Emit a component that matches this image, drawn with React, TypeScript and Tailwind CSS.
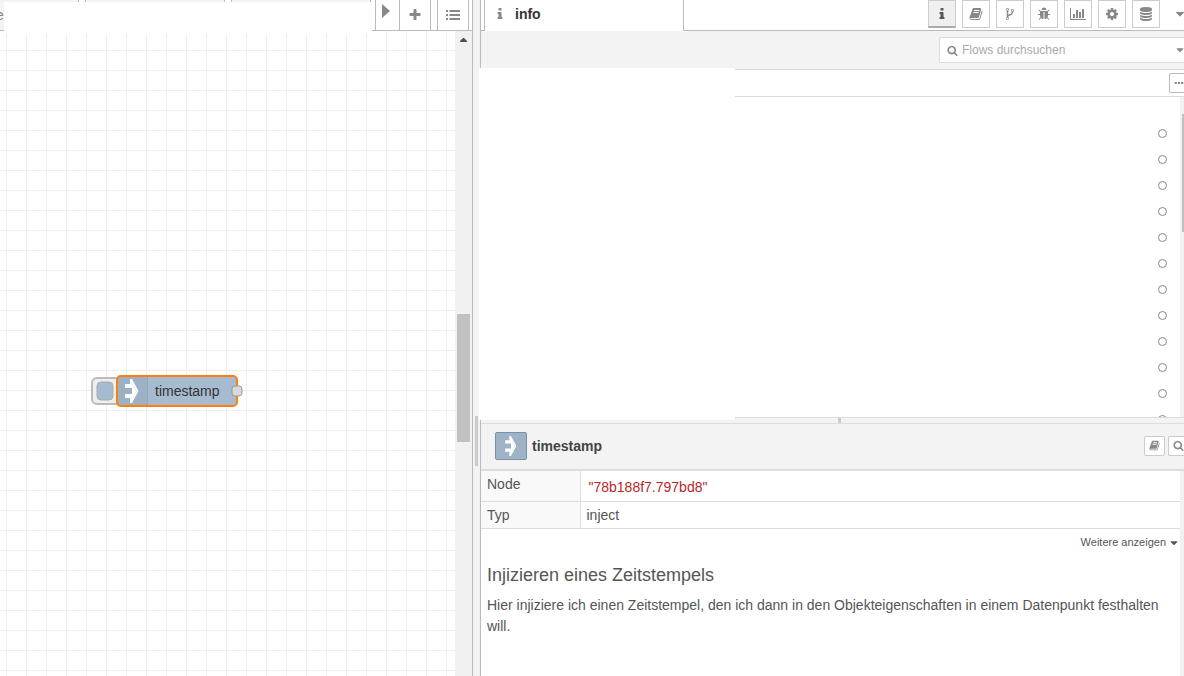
import type { ReactNode } from "react";

const ICONS = {
  info: "M1216 1344v128q0 26-19 45t-45 19h-512q-26 0-45-19t-19-45v-128q0-26 19-45t45-19h64v-384h-64q-26 0-45-19t-19-45v-128q0-26 19-45t45-19h384q26 0 45 19t19 45v576h64q26 0 45 19t19 45zm-128-1152v192q0 26-19 45t-45 19h-256q-26 0-45-19t-19-45v-192q0-26 19-45t45-19h256q26 0 45 19t19 45z",
  book: "M1703 478q40 57 18 129l-275 906q-19 64-76.5 107.5t-122.500 43.500h-923q-77 0-148.500-53.500t-99.500-131.500q-24-67-2-127 0-4 3-27t4-37q1-8-3-21.500t-3-19.500q2-11 8-21t16.500-23.500 16.500-23.500q23-38 45-91.500t30-91.500q3-10 .5-30t-.5-28q3-11 17-28t17-23q21-36 42-92t25-90q1-9-2.500-32t.5-28q4-13 22-30.500t22-22.500q19-26 42.500-84.500t27.500-96.500q1-8-3-25.500t-2-26.500q2-8 9-18t18-23 17-21q8-12 16.500-30.500t15-35 16-36 19.500-32 26.500-23.500 36-11.500 47.500 5.500l-1 3q38-9 51-9h761q74 0 114 56t18 130l-274 906q-36 119-71.500 153.500t-128.500 34.500h-869q-27 0-38 15-11 16-1 43 24 70 144 70h923q29 0 56-15.500t35-41.500l300-987q7-22 5-57 38 15 59 43zm-1064 2q-4 13 2 22.500t20 9.500h608q13 0 25.500-9.500t16.500-22.500l21-64q4-13-2-22.500t-20-9.500h-608q-13 0-25.500 9.500t-16.500 22.500zm-83 256q-4 13 2 22.500t20 9.500h608q13 0 25.500-9.500t16.500-22.500l21-64q4-13-2-22.500t-20-9.500h-608q-13 0-25.500 9.500t-16.500 22.500z",
  fork: "M672 1472q0-40-28-68t-68-28-68 28-28 68 28 68 68 28 68-28 28-68zm0-1152q0-40-28-68t-68-28-68 28-28 68 28 68 68 28 68-28 28-68zm640 128q0-40-28-68t-68-28-68 28-28 68 28 68 68 28 68-28 28-68zm96 0q0 52-26 96.500t-70 69.500q-2 287-226 414-67 38-203 81-128 40-169.500 71t-41.500 100v26q44 25 70 69.500t26 96.500q0 80-56 136t-136 56-136-56-56-136q0-52 26-96.500t70-69.500v-820q-44-25-70-69.500t-26-96.500q0-80 56-136t136-56 136 56 56 136q0 52-26 96.500t-70 69.500v497q54-26 154-57 55-17 87.500-29.500t70.500-31 59-39.500 40.500-51 28-69.500 8.500-91.500q-44-25-70-69.500t-26-96.500q0-80 56-136t136-56 136 56 56 136z",
  bug: "M1696 960q0 26-19 45t-45 19h-224q0 171-67 290l208 209q19 19 19 45t-19 45q-18 19-45 19t-45-19l-198-197q-5 5-15 13t-42 28.500-65 36.500-82 29-97 13v-896h-128v896q-51 0-101.500-13.500t-87-33-66-39-43.500-32.500l-15-14-183 207q-20 21-48 21-24 0-43-16-19-18-20.500-44.500t15.500-46.500l202-227q-58-114-58-274h-224q-26 0-45-19t-19-45 19-45 45-19h224v-294l-173-173q-19-19-19-45t19-45 45-19 45 19l173 173h844l173-173q19-19 45-19t45 19 19 45-19 45l-173 173v294h224q26 0 45 19t19 45zm-480-576h-640q0-133 93.500-226.500t226.500-93.500 226.500 93.500 93.500 226.500z",
  chart: "M640 896v512h-256v-512h256zm384-512v1024h-256v-1024h256zm1024 1152v128h-2048v-1536h128v1408h1920zm-640-896v768h-256v-768h256zm384-384v1152h-256v-1152h256z",
  cog: "M1152 896q0-106-75-181t-181-75-181 75-75 181 75 181 181 75 181-75 75-181zm512-109v222q0 12-8 23t-20 13l-185 28q-19 54-39 91 35 50 107 138 10 12 10 25t-9 23q-27 37-99 108t-94 71q-12 0-26-9l-138-108q-44 23-91 38-16 136-29 186-7 28-36 28h-222q-14 0-24.500-8.500t-11.500-21.500l-28-184q-49-16-90-37l-141 107q-10 9-25 9-14 0-25-11-126-114-165-168-7-10-7-23 0-12 8-23 15-21 51-66.500t54-70.500q-27-50-41-99l-183-27q-13-2-21-12.500t-8-23.500v-222q0-12 8-23t19-13l186-28q14-46 39-92-40-57-107-138-10-12-10-24 0-10 9-23 26-36 98.500-107.500t94.500-71.500q13 0 26 10l138 107q44-23 91-38 16-136 29-186 7-28 36-28h222q14 0 24.500 8.500t11.500 21.500l28 184q49 16 90 37l142-107q9-9 24-9 13 0 25 10 129 119 165 170 7 8 7 22 0 12-8 23-15 21-51 66.500t-54 70.500q26 50 41 98l183 28q13 2 21 12.500t8 23.500z",
  database: "M896 768q237 0 443-43t325-127v170q0 69-103 128t-280 93.500-385 34.500-385-34.500-280-93.500-103-128v-170q119 84 325 127t443 43zm0 768q237 0 443-43t325-127v170q0 69-103 128t-280 93.500-385 34.500-385-34.500-280-93.500-103-128v-170q119 84 325 127t443 43zm0-384q237 0 443-43t325-127v170q0 69-103 128t-280 93.500-385 34.500-385-34.500-280-93.500-103-128v-170q119 84 325 127t443 43zm0-1152q208 0 385 34.500t280 93.500 103 128v128q0 69-103 128t-280 93.500-385 34.500-385-34.500-280-93.500-103-128v-128q0-69 103-128t280-93.500 385-34.500z",
  search: "M1216 832q0-185-131.500-316.500t-316.500-131.500-316.500 131.500-131.500 316.500 131.500 316.500 316.500 131.500 316.500-131.500 131.500-316.500zm512 832q0 52-38 90t-90 38q-54 0-90-38l-343-342q-179 124-399 124-143 0-273.500-55.500t-225-150-150-225-55.500-273.500 55.500-273.500 150-225 225-150 273.500-55.500 273.500 55.500 225 150 150 225 55.500 273.500q0 220-124 399l343 343q37 37 37 90z",
  plus: "M1600 736v192q0 40-28 68t-68 28h-416v416q0 40-28 68t-68 28h-192q-40 0-68-28t-28-68v-416h-416q-40 0-68-28t-28-68v-192q0-40 28-68t68-28h416v-416q0-40 28-68t68-28h192q40 0 68 28t28 68v416h416q40 0 68 28t28 68z",
  list: "M0 256h256v256H0zM0 768h256v256H0zM0 1280h256v256H0zM448 256h1344v256H448zM448 768h1344v256H448zM448 1280h1344v256H448z",
  caret: "M1408 704q0 26-19 45l-448 448q-19 19-45 19t-45-19l-448-448q-19-19-19-45t19-45 45-19h896q26 0 45 19t19 45z",
  ellipsis: "M128 704h384v384H128zM704 704h384v384H704zM1280 704h384v384h-384z",
};

type IconName = keyof typeof ICONS;

function Icon({ name, className = "size-3.5" }: { name: IconName; className?: string }) {
  return (
    <svg
      aria-hidden="true"
      viewBox={name === "chart" ? "0 0 2048 1792" : "0 0 1792 1792"}
      className={`shrink-0 fill-current ${className}`}
    >
      <path d={ICONS[name]} />
    </svg>
  );
}

// 14 x 24 box
function InjectArrow() {
  return (
    <>
      <path d="M0 5h5V0h2l6.500 12L7 24H5v-5H0v-4h7V9H0z" fill="#fff" />
      <path d="M8 5l3.500 7L8 19" fill="none" stroke="#9fb3c7" strokeOpacity="0.300" strokeWidth="0.800" />
    </>
  );
}

const sidebarTabs: { icon: IconName; label: string }[] = [
  { icon: "info", label: "Info" },
  { icon: "book", label: "Hilfe" },
  { icon: "fork", label: "Verlauf" },
  { icon: "bug", label: "Debug" },
  { icon: "chart", label: "Dashboard" },
  { icon: "cog", label: "Konfiguration" },
  { icon: "database", label: "Kontext" },
];

function BarButton({ label, className, children }: { label: string; className: string; children: ReactNode }) {
  return (
    <button type="button" aria-label={label} className={`flex items-center justify-center border-[#bbb] bg-white ${className}`}>
      {children}
    </button>
  );
}

function FlowCanvas() {
  return (
    <svg className="h-full min-w-0 flex-1">
      <defs>
        <pattern id="grid" width="20" height="20" patternUnits="userSpaceOnUse">
          <path d="M6.500 0v20M0 19.500h20" stroke="#eee" fill="none" />
        </pattern>
      </defs>
      <rect width="100%" height="100%" fill="url(#grid)" />
      <g transform="translate(92 345)">
        <rect x="0" y="2" width="32" height="26" rx="5" fill="#eee" stroke="#bbb" strokeWidth="2" />
        <rect x="5" y="6" width="16" height="18" rx="4" fill="#a6bbcf" stroke="#aaa" />
        <rect x="25" y="0" width="120" height="30" rx="4" fill="#a6bbcf" />
        <path d="M55 0v30H29a4 4 0 0 1-4-4V4a4 4 0 0 1 4-4z" fill="#000" fillOpacity="0.050" />
        <path d="M55.500 1v28" stroke="#000" strokeOpacity="0.100" />
        <g transform="translate(33 3)">
          <InjectArrow />
        </g>
        <rect x="25" y="0" width="120" height="30" rx="4" fill="none" stroke="#ff7f0e" strokeWidth="2" />
        <rect x="140" y="10" width="10" height="10" rx="3" fill="#d9d9d9" stroke="#999" />
        <text x="63" y="20" fontSize="14" fill="#333">
          timestamp
        </text>
      </g>
    </svg>
  );
}

function Workspace() {
  return (
    <section className="relative flex w-[473px] shrink-0 flex-col border-r border-[#bbb]">
      <div className="flex h-[31px] border-b border-[#bbb]">
        <div className="flex min-w-0 flex-1 gap-1.5 overflow-hidden pr-1">
          <div className="flex w-[79px] items-center border-r border-[#bbb] bg-[#f3f3f3]">
            <span className="-ml-1 text-sm text-[#888]">e</span>
          </div>
          <div className="w-[140px] border-x border-[#bbb] bg-[#f3f3f3]" />
          <div className="flex-1 border-x border-[#bbb] bg-[#f3f3f3]" />
        </div>
        <BarButton label="Weiter" className="w-6 border-l pr-1 pb-2 text-[#888]">
          <svg aria-hidden="true" viewBox="0 0 8 14" className="h-3.5 w-2 fill-current">
            <path d="M0 0l8 7-8 7z" />
          </svg>
        </BarButton>
        <BarButton label="Flow hinzufügen" className="w-8 border-x text-[#888]">
          <Icon name="plus" />
        </BarButton>
        <BarButton label="Flows auflisten" className="mr-[3px] ml-1.5 w-8 border-x text-[#888]">
          <Icon name="list" />
        </BarButton>
      </div>
      <div className="flex min-h-0 flex-1">
        <FlowCanvas />
        <div className="flex w-[17px] flex-col bg-[#f1f1f1] px-0.5">
          <svg aria-hidden="true" viewBox="0 0 13 17" className="h-[17px] fill-[#505050]">
            <path d="M6 7h1l3 3v1H3v-1z" />
          </svg>
          <div className="mt-[266px] h-32 bg-[#c1c1c1]" />
        </div>
      </div>
      {/* blanked-out flow names */}
      <div className="absolute top-0.5 left-1 h-8 w-[368px] bg-white" />
    </section>
  );
}

function SidebarHeader() {
  return (
    <header className="flex h-[31px] justify-between">
      <div className="flex flex-1">
        <div className="w-[3px] border-b border-[#bbb]" />
        <div className="flex w-[200px] items-center gap-2 border-x border-[#bbb] pb-[3px] pl-2 text-sm font-bold text-[#333]">
          <Icon name="info" className="size-3.5 text-[#888]" />
          info
        </div>
        <div className="flex-1 border-b border-[#bbb]" />
      </div>
      <nav className="flex shrink-0 items-start gap-1.5 border-b border-[#bbb]">
        {sidebarTabs.map((tab, i) => (
          <button
            key={tab.icon}
            type="button"
            aria-label={tab.label}
            className={
              i === 0
                ? "flex h-7 w-7 items-center justify-center border border-b-2 border-[#ccc] border-b-[#aaa] bg-[#efefef] text-[#555]"
                : "flex h-7 w-7 items-center justify-center border border-[#ccc] bg-white text-[#888]"
            }
          >
            <Icon name={tab.icon} className={tab.icon === "chart" ? "h-3.5 w-4" : "size-3.5"} />
          </button>
        ))}
        <button type="button" aria-label="Weitere Tabs" className="ml-1 flex h-7 w-3.5 items-center justify-start overflow-hidden pl-[3px] text-[#888]">
          <Icon name="caret" />
        </button>
      </nav>
    </header>
  );
}

function Outliner() {
  return (
    <div className="flex h-[320px] overflow-hidden">
      <ul className="flex-1 pt-[23px]">
        {Array.from({ length: 12 }).map((_, i) => (
          <li key={i} className="flex h-[26px] items-center justify-end pr-[13px]">
            <span className="size-[9px] rounded-full border border-[#888]" />
          </li>
        ))}
      </ul>
      <div className="w-1 bg-[#f1f1f1] pt-[17px] pl-0.5">
        <div className="h-[118px] bg-[#c1c1c1]" />
      </div>
    </div>
  );
}

function NodeInfo() {
  return (
    <>
      <div className="flex h-[47px] items-center border-b-2 border-[#ddd] bg-[#f3f3f3] pb-0.5 pl-3.5">
        <span className="flex h-7 w-8 items-center justify-center rounded-xs border border-[#7b8fa5] bg-[#9fb3c7]">
          <svg aria-hidden="true" viewBox="0 0 14 24" className="h-5 w-3">
            <InjectArrow />
          </svg>
        </span>
        <h2 className="ml-[5px] flex-1 text-sm font-bold text-[#444]">timestamp</h2>
        <button type="button" aria-label="Hilfe" className="flex h-5 w-[21px] items-center justify-center rounded-xs border border-[#ccc] bg-white text-[#888]">
          <Icon name="book" className="size-[11px]" />
        </button>
        <button type="button" aria-label="Anzeigen" className="ml-[3px] flex h-5 w-4 items-center justify-end rounded-l-xs border border-r-0 border-[#ccc] bg-white text-[#888]">
          <Icon name="search" className="size-[11px]" />
        </button>
      </div>
      <div className="flex min-h-0 flex-1">
        <div className="flex-1">
          <table className="w-full border-collapse text-left text-sm text-[#555]">
            <tbody>
              <tr className="h-[30px] border-b border-[#ddd]">
                <th scope="row" className="w-[99px] border-r border-[#ddd] bg-[#f9f9f9] pb-1 pl-1.5 font-normal">
                  Node
                </th>
                <td className="pt-0.5 pl-2 text-[#b72828]">"78b188f7.797bd8"</td>
              </tr>
              <tr className="h-[27px] border-b border-[#ddd]">
                <th scope="row" className="border-r border-[#ddd] bg-[#f9f9f9] pl-1.5 font-normal">
                  Typ
                </th>
                <td className="pl-1.5">inject</td>
              </tr>
            </tbody>
          </table>
          <div className="flex h-7 justify-end">
            <button type="button" className="flex items-center gap-0.5 text-[11px] text-[#555]">
              Weitere anzeigen
              <Icon name="caret" className="size-3" />
            </button>
          </div>
          <article className="px-1.5 pt-1.5 text-[#555]">
            <h3 className="text-lg leading-6">Injizieren eines Zeitstempels</h3>
            <p className="mt-2 text-sm leading-[21px]">
              Hier injiziere ich einen Zeitstempel, den ich dann in den Objekteigenschaften in einem Datenpunkt festhalten will.
            </p>
          </article>
        </div>
        <div className="w-1 bg-[#f1f1f1]" />
      </div>
    </>
  );
}

export default function App() {
  return (
    <main className="flex h-screen overflow-hidden bg-white font-['Liberation_Sans',Arial,sans-serif]">
      <Workspace />
      <div className="w-[7px] shrink-0 bg-[#f3f3f3] pt-[416px] pl-0.5">
        <div className="h-[50px] w-[3px] bg-[#ccc]" />
      </div>
      <aside className="relative flex min-w-0 flex-1 flex-col border-l border-[#bbb]">
        <SidebarHeader />
        <div className="flex h-[39px] items-start justify-end border-b border-[#ddd] bg-[#f3f3f3] pt-1.5">
          <label className="flex h-[26px] w-[245px] items-center rounded-l-xs border border-r-0 border-[#ddd] bg-white pl-[7px] text-[#888]">
            <Icon name="search" className="size-[11px]" />
            <input
              type="text"
              aria-label="Flows durchsuchen"
              placeholder="Flows durchsuchen"
              className="ml-1 min-w-0 flex-1 text-xs outline-none placeholder:text-[#aaa]"
            />
            <Icon name="caret" className="-mr-0.5 size-3" />
          </label>
        </div>
        <div className="flex h-[27px] items-center justify-end border-b border-[#ddd]">
          <button type="button" aria-label="Mehr" className="flex h-5 w-[15px] items-center justify-end rounded-l-xs border border-r-0 border-[#bbb] text-[#888]">
            <Icon name="ellipsis" className="size-2.5" />
          </button>
        </div>
        <Outliner />
        <div className="flex h-[7px] justify-center border-y border-[#ddd] bg-[#f3f3f3] pl-3.5">
          <div className="w-[3px] bg-[#ccc]" />
        </div>
        <NodeInfo />
        {/* blanked-out flow list */}
        <div className="absolute top-[68px] -left-0.5 h-[352px] w-64 bg-white" />
      </aside>
    </main>
  );
}
